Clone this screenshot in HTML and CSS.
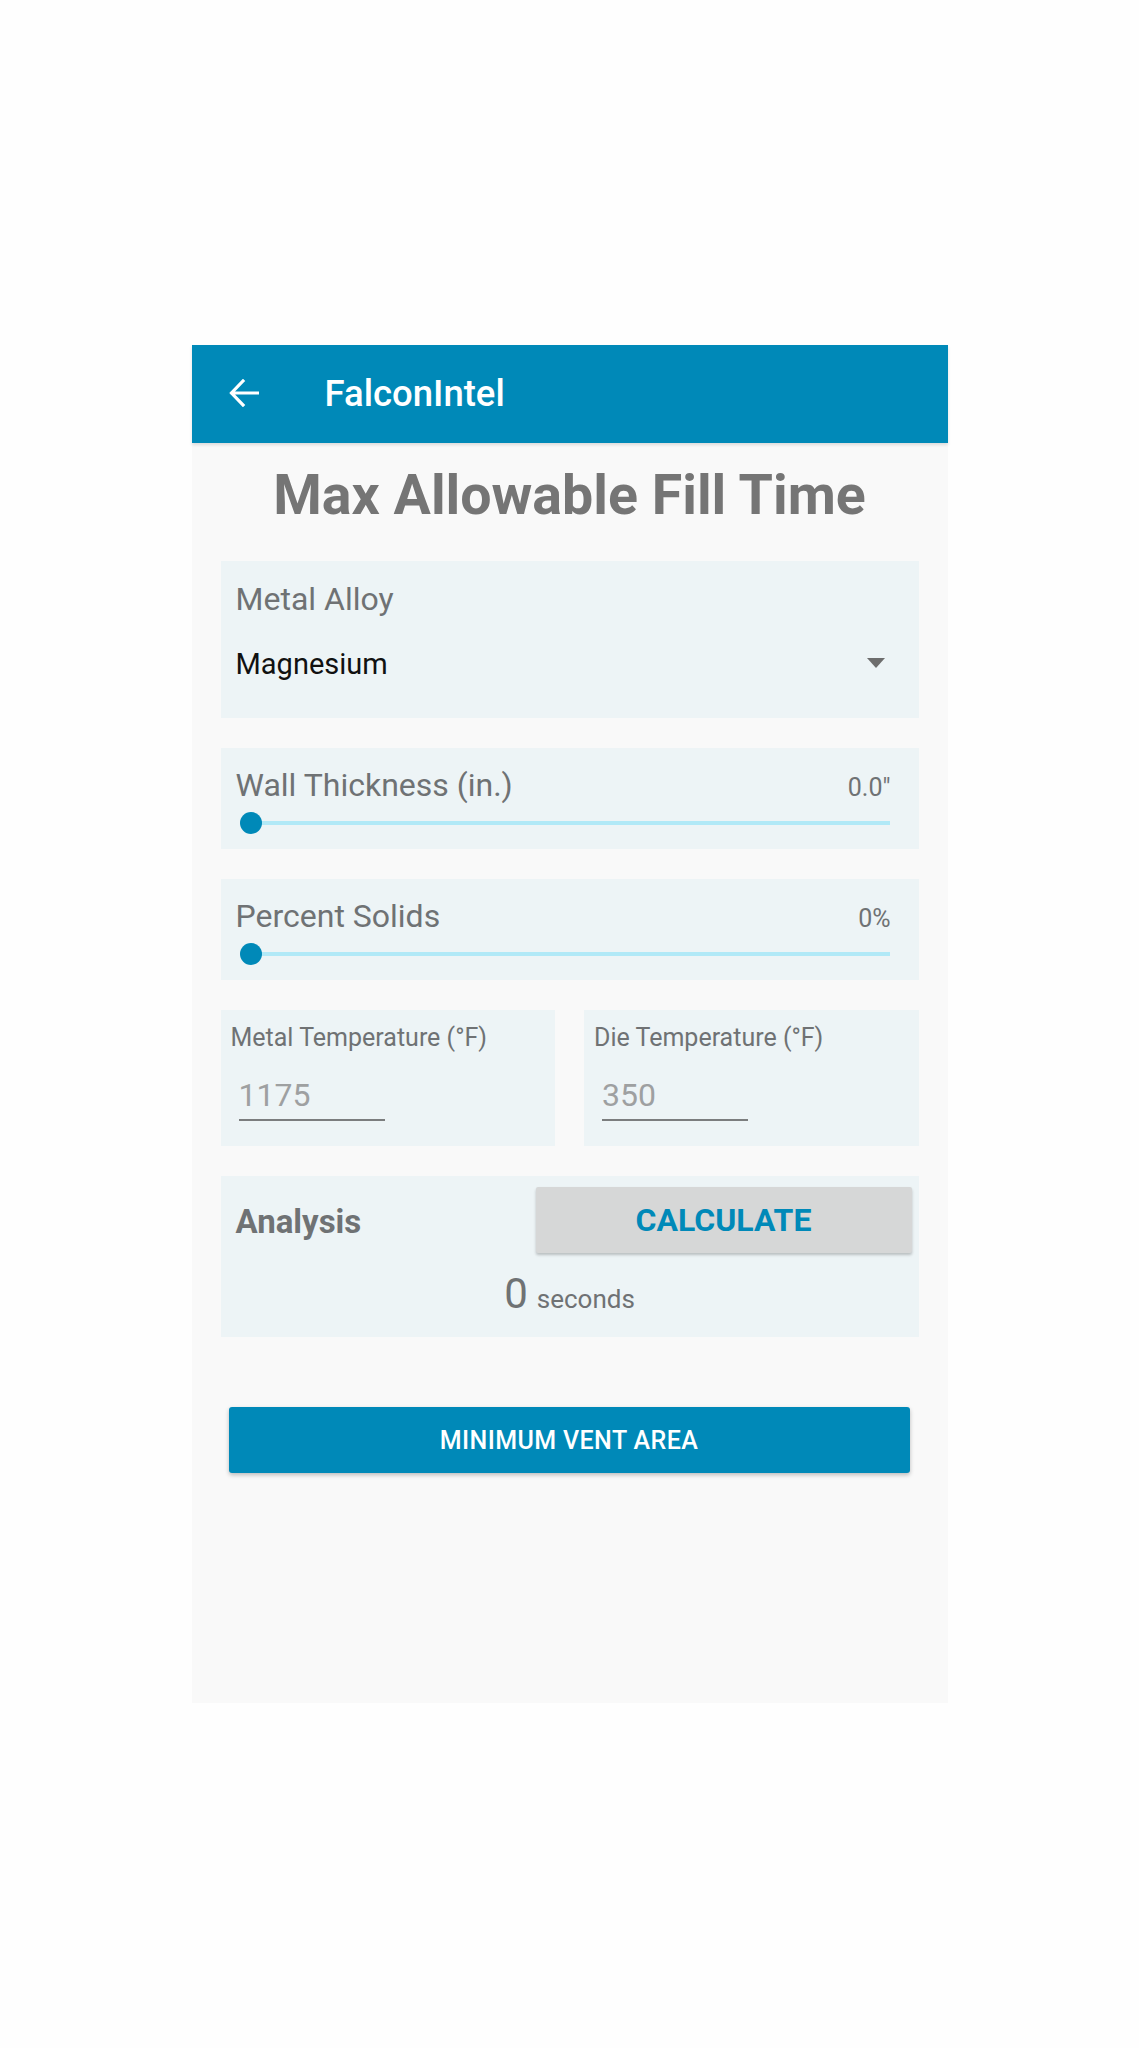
FILE: index.html
```html
<!DOCTYPE html>
<html>
<head>
<meta charset="utf-8">
<link rel="stylesheet" href="styles.css">
</head>
<body>
<div class="phone">
  <header class="appbar">
    <svg class="back" width="30" height="28" viewBox="0 0 30 28"><path d="M29 14H3M14 2L2.5 14 14 26" fill="none" stroke="#fff" stroke-width="3.2" stroke-linecap="square"/></svg>
    <span class="appname">FalconIntel</span>
  </header>
  <main class="content">
    <h1 class="title">Max Allowable Fill Time</h1>

    <section class="card select-card">
      <div class="label">Metal Alloy</div>
      <div class="select-row">
        <span class="select-value">Magnesium</span>
        <span class="caret"></span>
      </div>
    </section>

    <section class="card slider-card">
      <div class="slider-head">
        <span class="label">Wall Thickness (in.)</span>
        <span class="slider-value">0.0"</span>
      </div>
      <div class="slider"><span class="thumb"></span></div>
    </section>

    <section class="card slider-card">
      <div class="slider-head">
        <span class="label">Percent Solids</span>
        <span class="slider-value">0%</span>
      </div>
      <div class="slider"><span class="thumb"></span></div>
    </section>

    <div class="temp-row">
      <section class="card temp-card">
        <div class="small-label">Metal Temperature (°F)</div>
        <div class="input">1175</div>
      </section>
      <section class="card temp-card">
        <div class="small-label">Die Temperature (°F)</div>
        <div class="input">350</div>
      </section>
    </div>

    <section class="card analysis-card">
      <div class="analysis-head">
        <span class="analysis-label">Analysis</span>
        <button class="calc-btn">CALCULATE</button>
      </div>
      <div class="result"><span class="result-num">0</span><span class="result-unit">seconds</span></div>
    </section>

    <button class="vent-btn">MINIMUM VENT AREA</button>
  </main>
</div>
</body>
</html>
```

FILE: styles.css
```css
* { box-sizing: border-box; }
html, body { margin: 0; padding: 0; background: #fefefe; }
body { font-family: Roboto, "Noto Sans", sans-serif; padding-top: 345px; }

.phone {
  width: 756px;
  height: 1358px;
  margin: 0 auto;
  background: #f9f9f9;
}

.appbar {
  height: 98px;
  background: #0089b8;
  display: flex;
  align-items: center;
  padding-left: 37px;
  box-shadow: 0 2px 3px rgba(0,0,0,0.12);
}
.back { display: block; margin-top: -3px; }
.appname {
  margin-left: 66px;
  margin-top: -2px;
  color: #fff;
  font-weight: 500;
  font-size: 36.5px;
}

.content { padding: 0 29px; }

.title {
  margin: 21px 0 33px;
  text-align: center;
  color: #757575;
  font-weight: 700;
  font-size: 55.5px;
  line-height: 64px;
}

.card { background: #edf4f6; }

.label { color: #6f7274; font-size: 32px; line-height: 38px; }

.select-card {
  height: 157px;
  padding: 19px 34px 0 15px;
  margin-bottom: 30px;
}
.select-row {
  display: flex;
  align-items: center;
  justify-content: space-between;
  margin-top: 28px;
}
.select-value { color: #111; font-size: 29px; line-height: 36px; }
.caret {
  width: 0; height: 0;
  border-left: 9px solid transparent;
  border-right: 9px solid transparent;
  border-top: 10px solid #6d6d6d;
  margin-top: -2px;
}

.slider-card {
  height: 101px;
  padding: 18px 28px 0 15px;
  margin-bottom: 30px;
}
.slider-head { display: flex; justify-content: space-between; align-items: center; }
.slider-value { color: #6f7274; font-size: 25px; margin-top: 5px; }
.slider {
  position: relative;
  height: 4px;
  margin: 17px 1px 0 15px;
  background: #b1e9f7;
}
.thumb {
  position: absolute;
  left: -11px;
  top: -9px;
  width: 22px;
  height: 22px;
  border-radius: 50%;
  background: #0089b8;
}

.temp-row {
  display: grid;
  grid-template-columns: 1fr 1fr;
  gap: 29px;
  margin-bottom: 30px;
}
.temp-card { height: 136px; padding: 13px 10px 0 10px; }
.small-label { color: #6f7274; font-size: 25px; line-height: 30px; }
.input {
  margin: 23px 0 0 8px;
  width: 146px;
  color: #9ea0a1;
  font-size: 32px;
  line-height: 38px;
  padding-bottom: 5px;
  border-bottom: 2px solid #7b7d7e;
}

.analysis-card {
  height: 161px;
  padding: 11px 7px 0 15px;
  margin-bottom: 70px;
}
.analysis-head { display: flex; align-items: center; justify-content: space-between; }
.analysis-label { color: #6f7274; font-size: 33px; font-weight: 700; margin-top: 2px; }
.calc-btn {
  width: 376px;
  height: 66px;
  border: none;
  border-radius: 2px;
  background: #d6d7d7;
  color: #0089b8;
  font-family: Roboto, "Noto Sans", sans-serif;
  font-weight: 700;
  font-size: 32px;
  box-shadow: 0 2px 3px rgba(0,0,0,0.22);
}
.result {
  text-align: center;
  margin: 16px 0 0 -8px;
  color: #6f7274;
}
.result-num { font-size: 42px; margin-right: 9px; }
.result-unit { font-size: 26px; }

.vent-btn {
  display: block;
  width: 681px;
  height: 66px;
  margin: 0 8px;
  border: none;
  border-radius: 3px;
  background: #0089b8;
  color: #fff;
  font-family: Roboto, "Noto Sans", sans-serif;
  font-weight: 500;
  font-size: 25px;
  letter-spacing: 0.4px;
  box-shadow: 0 2px 4px rgba(0,0,0,0.25);
}
```
